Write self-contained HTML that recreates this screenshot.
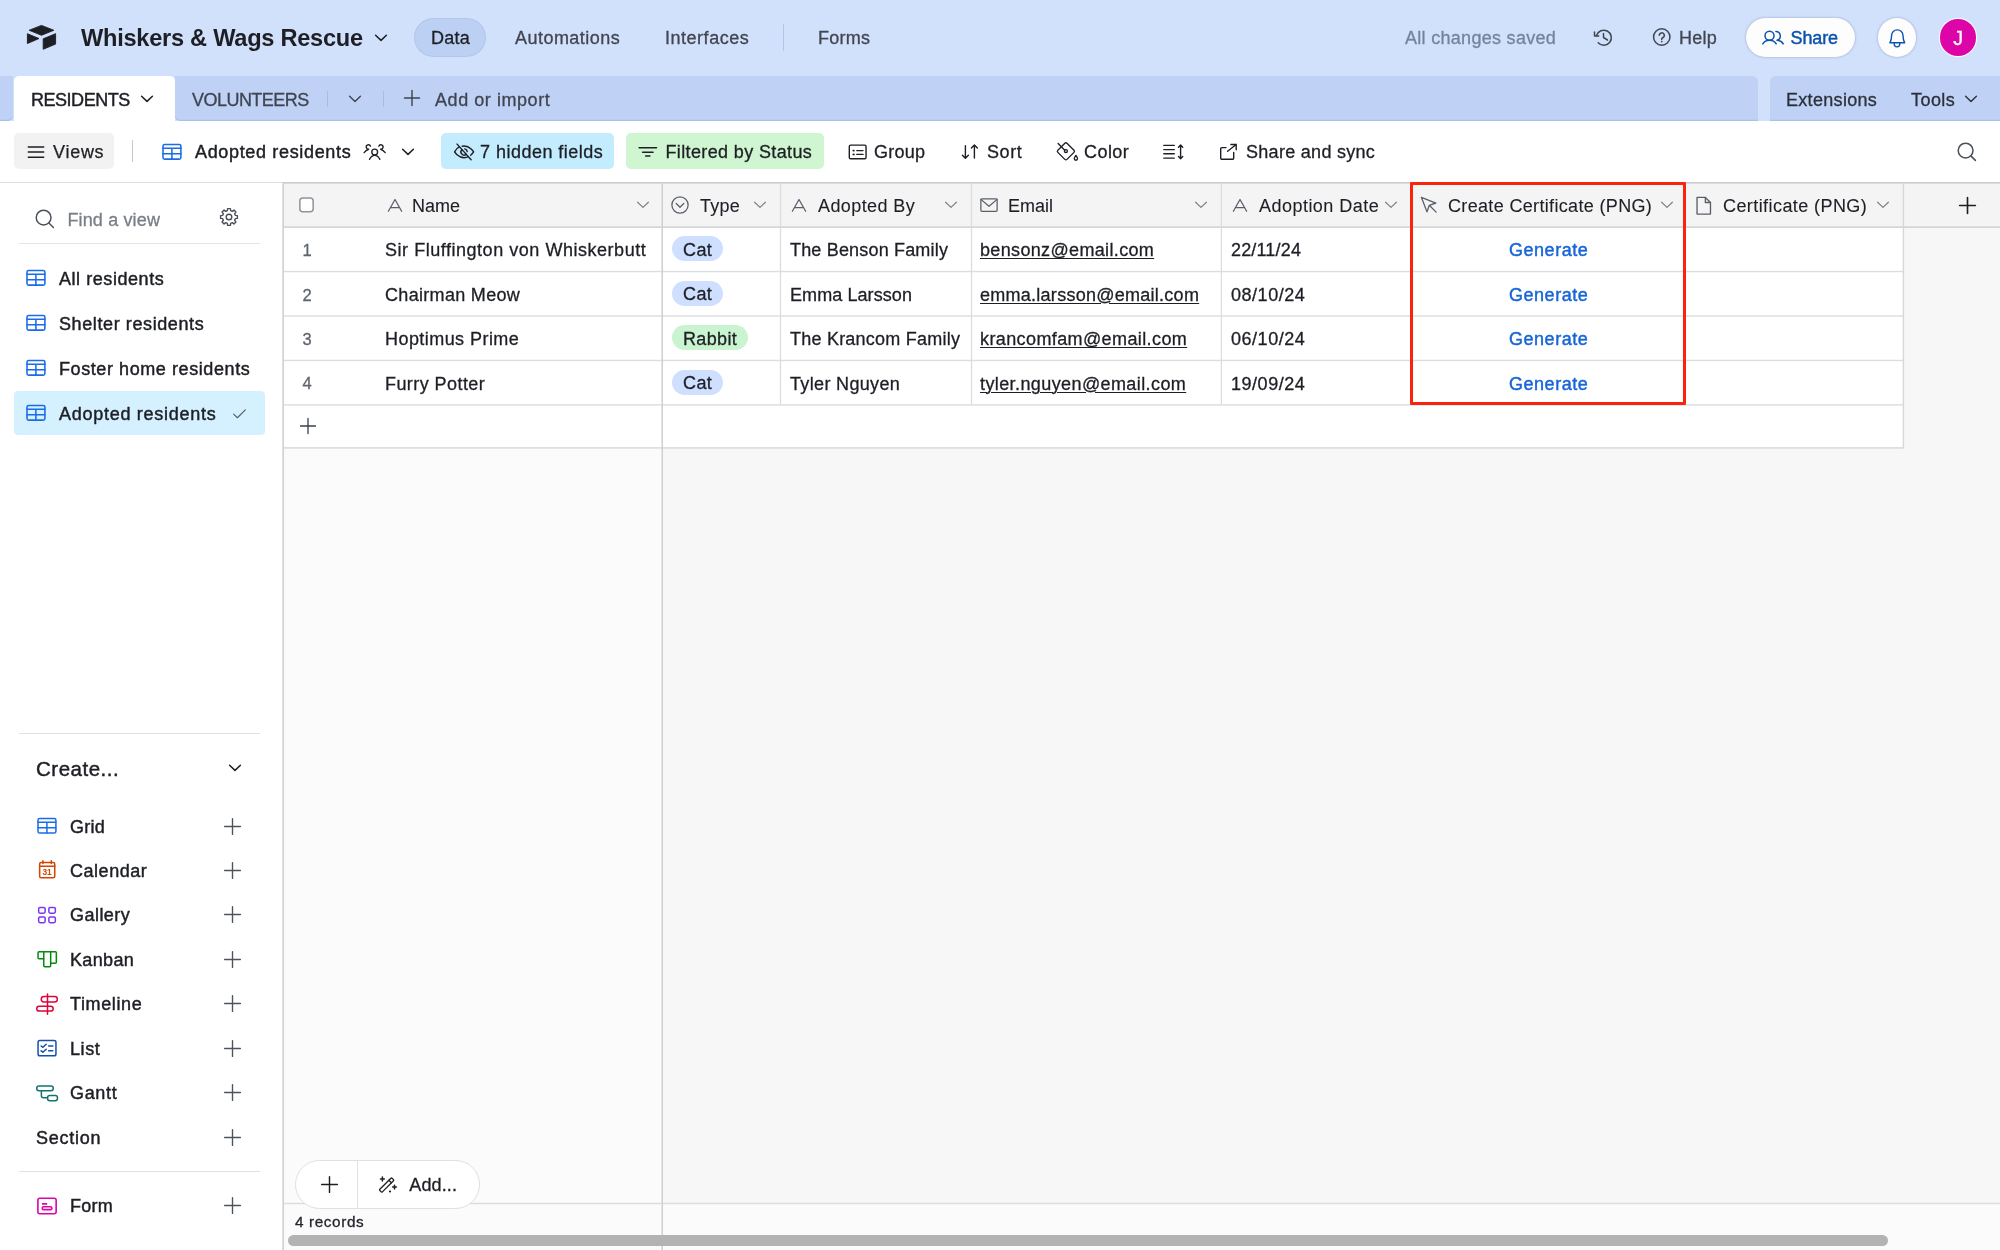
<!DOCTYPE html>
<html lang="en"><head><meta charset="utf-8"><title>Whiskers &amp; Wags Rescue - Airtable</title><style>
*{margin:0;padding:0}
html,body{width:2000px;height:1250px;overflow:hidden;background:#d1e1fc;font-family:"Liberation Sans",sans-serif}
.b{position:absolute}
.t{position:absolute;white-space:nowrap}
.i{position:absolute;overflow:visible}
header,nav,section,aside,main{position:absolute;left:0;top:0;width:2000px;height:1250px;will-change:transform}
</style></head><body>
<header class="top">
<svg class="i" style="left:0;top:0" width="70" height="70" viewBox="0 0 70 70" fill="#1d1f25" stroke="#1d1f25" stroke-width="0.9" stroke-linejoin="round"><path d="M29.200 30.250L41.500 25.400L53.800 30.250L41.500 35.300z"/><path d="M27.400 33.700L39 38.550L27.400 43.500z"/><path d="M43.200 38.800L55.600 33.700V44.100L43.200 49.300z"/></svg>
<span class="t" style="left:81.00px;top:23.16px;font-size:23.60px;line-height:30.68px;color:#1d1f25;font-weight:700;letter-spacing:-0.261px;">Whiskers &amp; Wags Rescue</span>
<svg class="i" style="left:373.00px;top:29.70px;color:#1d1f25;" width="16.00" height="16.00" viewBox="0 0 16 16" fill="none" stroke="currentColor" stroke-width="1.50" stroke-linecap="round" stroke-linejoin="round"><path d="M2.600 5.200L8 10.400l5.400-5.200"/></svg>
<div class="b" style="left:414.00px;top:18.00px;width:72.00px;height:38.50px;background:#bcd0f3;border-radius:20px;box-shadow:inset 0 0 0 1px rgba(40,70,140,.07)"></div>
<span class="t" style="left:431.00px;top:27.10px;font-size:18.00px;line-height:23.40px;color:#1d1f25;-webkit-text-stroke:0.30px #1d1f25;letter-spacing:0.277px;">Data</span>
<span class="t" style="left:515.00px;top:27.10px;font-size:18.00px;line-height:23.40px;color:#40454f;-webkit-text-stroke:0.30px #40454f;letter-spacing:0.470px;">Automations</span>
<span class="t" style="left:665.00px;top:27.10px;font-size:18.00px;line-height:23.40px;color:#40454f;-webkit-text-stroke:0.30px #40454f;letter-spacing:0.521px;">Interfaces</span>
<div class="b" style="left:783.00px;top:24.00px;width:1.40px;height:27.00px;background:#b4c4e4"></div>
<span class="t" style="left:818.00px;top:27.10px;font-size:18.00px;line-height:23.40px;color:#40454f;-webkit-text-stroke:0.30px #40454f;letter-spacing:0.222px;">Forms</span>
<span class="t" style="left:1405.00px;top:27.10px;font-size:18.00px;line-height:23.40px;color:#76829b;-webkit-text-stroke:0.30px #76829b;letter-spacing:0.297px;">All changes saved</span>
<svg class="i" style="left:1592.00px;top:25.50px;color:#40454f;" width="24.00" height="24.00" viewBox="0 0 24 24" fill="none" stroke="currentColor" stroke-width="1.50" stroke-linecap="round" stroke-linejoin="round"><path d="M4.530 9.540A7.550 7.550 0 1 1 6.190 16.860"/><path d="M2.500 5.900V10h4.200"/><path d="M11.500 7.500v4l4 2.500"/></svg>
<svg class="i" style="left:1650.00px;top:25.00px;color:#40454f;" width="24.00" height="24.00" viewBox="0 0 24 24" fill="none" stroke="currentColor" stroke-width="1.50" stroke-linecap="round" stroke-linejoin="round"><circle cx="11.750" cy="12" r="8.200"/><path d="M9.300 10.300a2.500 2.500 0 1 1 3.400 2.400c-.6.250-.95.700-.95 1.300v.4"/><circle cx="11.750" cy="16.600" r=".85" fill="currentColor" stroke="none"/></svg>
<span class="t" style="left:1679.00px;top:27.10px;font-size:18.00px;line-height:23.40px;color:#40454f;-webkit-text-stroke:0.30px #40454f;letter-spacing:0.277px;">Help</span>
<div class="b" style="left:1745.50px;top:18.00px;width:109.50px;height:38.60px;background:#fdfdfe;border-radius:20px;box-shadow:0 0 2.500px rgba(20,40,90,.35)"></div>
<svg class="i" style="left:1761.00px;top:25.50px;color:#0d52ac;" width="24.00" height="24.00" viewBox="0 0 24 24" fill="none" stroke="currentColor" stroke-width="1.50" stroke-linecap="round" stroke-linejoin="round"><circle cx="8.500" cy="9.750" r="4.500"/><path d="M1.800 17.900c1.400-2.400 3.800-3.700 6.700-3.700s5.300 1.300 6.700 3.700"/><path d="M14.900 5.400a4.500 4.500 0 0 1 1.200 8.800"/><path d="M16.600 14.300c2.400.2 4.400 1.500 5.600 3.600"/></svg>
<span class="t" style="left:1790.50px;top:27.10px;font-size:18.00px;line-height:23.40px;color:#0d52ac;-webkit-text-stroke:0.45px #0d52ac;letter-spacing:-0.122px;">Share</span>
<div class="b" style="left:1877.50px;top:18.00px;width:38.40px;height:38.60px;background:#fdfdfe;border-radius:20px;box-shadow:0 0 2.500px rgba(20,40,90,.35)"></div>
<svg class="i" style="left:1884.70px;top:25.35px;color:#0d52ac;" width="24.00" height="24.00" viewBox="0 0 24 24" fill="none" stroke="currentColor" stroke-width="1.40" stroke-linecap="round" stroke-linejoin="round"><path d="M4.900 17.800h14.800c-1.100-1.800-1.700-4.200-1.700-7.200a5.700 5.700 0 0 0-11.400 0c0 3-.6 5.400-1.700 7.200z"/><path d="M9.150 18.300a2.850 3.600 0 0 0 5.700 0"/></svg>
<div class="b" style="left:1939.60px;top:18.60px;width:36.90px;height:37.40px;background:#dd04a8;border-radius:20px;box-shadow:0 0 0 1.200px rgba(255,255,255,.85)"></div>
<span class="t" style="left:1953.30px;top:25.86px;font-size:19.60px;line-height:25.48px;color:#fff;-webkit-text-stroke:0.30px #fff;">J</span>
</header>
<nav class="tabs">
<div class="b" style="left:0.00px;top:76.00px;width:13.00px;height:44.60px;background:#bfd2f5;border-radius:0 0 5px 0;box-shadow:inset 0 -1.200px 0 #abc1e8"></div>
<div class="b" style="left:13.50px;top:76.00px;width:161.50px;height:46.00px;background:#fff;border-radius:5px 5px 0 0"></div>
<div class="b" style="left:175.00px;top:76.00px;width:1583.00px;height:44.60px;background:#bfd2f5;border-radius:0 6px 0 5px;box-shadow:inset 0 -1.200px 0 #abc1e8"></div>
<div class="b" style="left:1770.00px;top:76.00px;width:230.00px;height:44.60px;background:#bfd2f5;border-radius:6px 0 0 0;box-shadow:inset 0 -1.200px 0 #abc1e8"></div>
<span class="t" style="left:31.00px;top:88.70px;font-size:18.00px;line-height:23.40px;color:#1d1f25;-webkit-text-stroke:0.45px #1d1f25;letter-spacing:-0.474px;">RESIDENTS</span>
<svg class="i" style="left:139.10px;top:90.95px;color:#1d1f25;" width="16.00" height="16.00" viewBox="0 0 16 16" fill="none" stroke="currentColor" stroke-width="1.50" stroke-linecap="round" stroke-linejoin="round"><path d="M2.600 5.200L8 10.400l5.400-5.200"/></svg>
<span class="t" style="left:192.00px;top:88.70px;font-size:18.00px;line-height:23.40px;color:#3f4450;-webkit-text-stroke:0.30px #3f4450;letter-spacing:-0.530px;">VOLUNTEERS</span>
<div class="b" style="left:327.00px;top:91.00px;width:1.30px;height:16.00px;background:#a9bde2"></div>
<svg class="i" style="left:347.40px;top:90.95px;color:#3f4450;" width="16.00" height="16.00" viewBox="0 0 16 16" fill="none" stroke="currentColor" stroke-width="1.40" stroke-linecap="round" stroke-linejoin="round"><path d="M2.600 5.200L8 10.400l5.400-5.200"/></svg>
<div class="b" style="left:383.00px;top:91.00px;width:1.30px;height:16.00px;background:#a9bde2"></div>
<svg class="i" style="left:402.00px;top:88.00px;color:#3f4450;" width="20.00" height="20.00" viewBox="0 0 16 16" fill="none" stroke="currentColor" stroke-width="1.15" stroke-linecap="round" stroke-linejoin="round"><path d="M8 2v12M2 8h12"/></svg>
<span class="t" style="left:435.00px;top:88.70px;font-size:18.00px;line-height:23.40px;color:#3f4450;-webkit-text-stroke:0.30px #3f4450;letter-spacing:0.556px;">Add or import</span>
<span class="t" style="left:1786.00px;top:88.70px;font-size:18.00px;line-height:23.40px;color:#2c303a;-webkit-text-stroke:0.30px #2c303a;letter-spacing:0.309px;">Extensions</span>
<span class="t" style="left:1911.00px;top:88.70px;font-size:18.00px;line-height:23.40px;color:#2c303a;-webkit-text-stroke:0.30px #2c303a;letter-spacing:0.438px;">Tools</span>
<svg class="i" style="left:1963.25px;top:90.95px;color:#2c303a;" width="16.00" height="16.00" viewBox="0 0 16 16" fill="none" stroke="currentColor" stroke-width="1.40" stroke-linecap="round" stroke-linejoin="round"><path d="M2.600 5.200L8 10.400l5.400-5.200"/></svg>
</nav>
<section class="viewbar">
<div class="b" style="left:0.00px;top:121.00px;width:2000.00px;height:1129.00px;background:#fff"></div>
<div class="b" style="left:14.00px;top:133.30px;width:100.00px;height:35.70px;background:#f2f2f2;border-radius:5px"></div>
<svg class="i" style="left:24px;top:139.500px;color:#1d1f25" width="24" height="24" viewBox="0 0 24 24" fill="none" stroke="currentColor" stroke-width="1.500" stroke-linecap="round"><path d="M4.300 6.900h15.400M4.300 12.100h15.400M4.300 17.300h15.400"/></svg>
<span class="t" style="left:53.00px;top:141.10px;font-size:18.00px;line-height:23.40px;color:#1d1f25;-webkit-text-stroke:0.25px #1d1f25;letter-spacing:0.733px;">Views</span>
<div class="b" style="left:131.50px;top:140.00px;width:1.60px;height:22.00px;background:#c8c9cc"></div>
<svg class="i" style="left:159.55px;top:139.75px;color:#1a6ce8;" width="24.00" height="24.00" viewBox="0 0 24 24" fill="none" stroke="currentColor" stroke-width="1.55" stroke-linecap="round" stroke-linejoin="round"><rect x="3" y="4.400" width="17.900" height="14.700" rx="1.700"/><path d="M3 8.300h17.900M3 13.800h17.900M11.900 8.300v10.800"/></svg>
<span class="t" style="left:195.00px;top:141.10px;font-size:18.00px;line-height:23.40px;color:#1d1f25;-webkit-text-stroke:0.45px #1d1f25;letter-spacing:0.660px;">Adopted residents</span>
<svg class="i" style="left:363.00px;top:140.00px;color:#1d1f25;" width="24.00" height="24.00" viewBox="0 0 24 24" fill="none" stroke="currentColor" stroke-width="1.35" stroke-linecap="round" stroke-linejoin="round"><circle cx="11.700" cy="12" r="2.900"/><path d="M6.500 19.400Q8.500 15.400 11.700 15.400Q14.900 15.400 16.900 19.400"/><path d="M7.500 6.200A2.200 2.200 0 1 0 5.800 9.150M1.100 12.600Q3 10.200 5.600 9.300"/><path d="M15.800 6.200A2.200 2.200 0 1 1 17.500 9.150M22.200 12.600Q20.300 10.200 17.700 9.300"/></svg>
<svg class="i" style="left:400.00px;top:143.50px;color:#1d1f25;" width="16.00" height="16.00" viewBox="0 0 16 16" fill="none" stroke="currentColor" stroke-width="1.50" stroke-linecap="round" stroke-linejoin="round"><path d="M2.600 5.200L8 10.400l5.400-5.200"/></svg>
<div class="b" style="left:441.00px;top:133.30px;width:173.00px;height:35.70px;background:#c4ecff;border-radius:5px"></div>
<svg class="i" style="left:451.50px;top:139.50px;color:#1d1f25;" width="24.00" height="24.00" viewBox="0 0 24 24" fill="none" stroke="currentColor" stroke-width="1.40" stroke-linecap="round" stroke-linejoin="round"><path d="M5.100 4.100L19.100 19.700"/><path d="M7.300 6.900C4.300 8.400 2.600 11.900 2.600 11.900s3.300 5.800 9.500 5.800c1.600 0 3-.4 4.200-1"/><path d="M10.200 6.200c.6-.1 1.200-.2 1.900-.2 6.200 0 9.500 5.900 9.500 5.900s-1 1.800-2.900 3.300"/><path d="M14.200 14.200a3.100 3.100 0 0 1-4.300-4.500M12.700 8.900a3.100 3.100 0 0 1 2.500 2.700"/></svg>
<span class="t" style="left:480.00px;top:141.10px;font-size:18.00px;line-height:23.40px;color:#1d1f25;-webkit-text-stroke:0.30px #1d1f25;letter-spacing:0.476px;">7 hidden fields</span>
<div class="b" style="left:626.00px;top:133.30px;width:198.00px;height:35.70px;background:#cff5d1;border-radius:5px"></div>
<svg class="i" style="left:636.00px;top:139.50px;color:#1d1f25;" width="24.00" height="24.00" viewBox="0 0 24 24" fill="none" stroke="currentColor" stroke-width="1.50" stroke-linecap="round" stroke-linejoin="round"><path d="M3.100 7.700h17.400M6.600 12.200h10.450M9.700 16.100h4.200"/></svg>
<span class="t" style="left:665.50px;top:141.10px;font-size:18.00px;line-height:23.40px;color:#1d1f25;-webkit-text-stroke:0.30px #1d1f25;letter-spacing:0.368px;">Filtered by Status</span>
<svg class="i" style="left:845.50px;top:139.50px;color:#1d1f25;" width="24.00" height="24.00" viewBox="0 0 24 24" fill="none" stroke="currentColor" stroke-width="1.40" stroke-linecap="round" stroke-linejoin="round"><rect x="3.300" y="5.100" width="16.750" height="13.600" rx="1.300"/><path d="M10.750 10.600H17M10.750 14.400H17"/><path d="M7.300 10.600h.6M7.300 14.400h.6" stroke-width="1.700"/></svg>
<span class="t" style="left:874.00px;top:141.10px;font-size:18.00px;line-height:23.40px;color:#1d1f25;-webkit-text-stroke:0.30px #1d1f25;letter-spacing:0.215px;">Group</span>
<svg class="i" style="left:958.00px;top:139.50px;color:#1d1f25;" width="24.00" height="24.00" viewBox="0 0 24 24" fill="none" stroke="currentColor" stroke-width="1.40" stroke-linecap="round" stroke-linejoin="round"><path d="M7.400 5.700V18M4.400 15.200l3 3 3-3"/><path d="M16.400 18V5.100M13.400 8.100l3-3 3 3"/></svg>
<span class="t" style="left:987.00px;top:141.10px;font-size:18.00px;line-height:23.40px;color:#1d1f25;-webkit-text-stroke:0.30px #1d1f25;letter-spacing:0.567px;">Sort</span>
<svg class="i" style="left:1054.00px;top:139.50px;color:#1d1f25;" width="24.00" height="24.00" viewBox="0 0 24 24" fill="none" stroke="currentColor" stroke-width="1.35" stroke-linecap="round" stroke-linejoin="round"><rect x="5.450" y="4.850" width="12.900" height="12.900" rx="1.500" transform="rotate(45 11.900 11.300)"/><path d="M4.100 3.500l6.700 6.700"/><circle cx="11.900" cy="11.100" r="1.500"/><path d="M21.900 15.400c1 1.400 1.600 2.300 1.600 3.200a1.600 1.600 0 0 1-3.200 0c0-.9.600-1.800 1.600-3.200z"/></svg>
<span class="t" style="left:1084.00px;top:141.10px;font-size:18.00px;line-height:23.40px;color:#1d1f25;-webkit-text-stroke:0.30px #1d1f25;letter-spacing:0.441px;">Color</span>
<svg class="i" style="left:1161.00px;top:139.50px;color:#1d1f25;" width="24.00" height="24.00" viewBox="0 0 24 24" fill="none" stroke="currentColor" stroke-width="1.40" stroke-linecap="round" stroke-linejoin="round"><path d="M2.800 5.400h10.500M2.800 9.600h10.500M2.800 13.750h10.500M2.800 18.100h10.500"/><path d="M19.600 5.100v13.600M17.500 7.200l2.100-2.100 2.100 2.100M17.500 16.600l2.100 2.100 2.100-2.100"/></svg>
<svg class="i" style="left:1217.00px;top:139.50px;color:#1d1f25;" width="24.00" height="24.00" viewBox="0 0 24 24" fill="none" stroke="currentColor" stroke-width="1.40" stroke-linecap="round" stroke-linejoin="round"><path d="M9 7.600H4.900a1.200 1.200 0 0 0-1.200 1.200v9.300a1.200 1.200 0 0 0 1.200 1.200h10.600a1.200 1.200 0 0 0 1.200-1.200v-5.600"/><path d="M10.600 11.200l8.600-6.750M13.900 4.450h5.300v5.300"/></svg>
<span class="t" style="left:1246.00px;top:141.10px;font-size:18.00px;line-height:23.40px;color:#1d1f25;-webkit-text-stroke:0.30px #1d1f25;letter-spacing:0.291px;">Share and sync</span>
<svg class="i" style="left:1954.70px;top:139.50px;color:#4a4f59;" width="24.00" height="24.00" viewBox="0 0 24 24" fill="none" stroke="currentColor" stroke-width="1.50" stroke-linecap="round" stroke-linejoin="round"><circle cx="10.600" cy="10.600" r="7.400"/><path d="M15.900 15.900l4.500 4.500"/></svg>
</section>
<aside class="side">
<div class="b" style="left:0.00px;top:183.00px;width:283.00px;height:1067.00px;background:#fff"></div>
<svg class="i" style="left:32.80px;top:207.20px;color:#4a4f59;" width="24.00" height="24.00" viewBox="0 0 24 24" fill="none" stroke="currentColor" stroke-width="1.45" stroke-linecap="round" stroke-linejoin="round"><circle cx="10.600" cy="10.600" r="7.400"/><path d="M15.900 15.900l4.500 4.500"/></svg>
<span class="t" style="left:67.40px;top:208.60px;font-size:18.00px;line-height:23.40px;color:#797e88;-webkit-text-stroke:0.30px #797e88;letter-spacing:0.148px;">Find a view</span>
<svg class="i" style="left:217.40px;top:205.40px;color:#4a4f59;" width="24.00" height="24.00" viewBox="0 0 24 24" fill="none" stroke="currentColor" stroke-width="1.40" stroke-linecap="round" stroke-linejoin="round"><circle cx="12" cy="12" r="2.800"/><path d="M10.32 5.72L10.60 3.62L13.40 3.62L13.68 5.72L15.25 6.37L16.94 5.08L18.92 7.06L17.63 8.75L18.28 10.32L20.38 10.60L20.38 13.40L18.28 13.68L17.63 15.25L18.92 16.94L16.94 18.92L15.25 17.63L13.68 18.28L13.40 20.38L10.60 20.38L10.32 18.28L8.75 17.63L7.06 18.92L5.08 16.94L6.37 15.25L5.72 13.68L3.62 13.40L3.62 10.60L5.72 10.32L6.37 8.75L5.08 7.06L7.06 5.08L8.75 6.37z"/></svg>
<div class="b" style="left:19.00px;top:242.80px;width:241.00px;height:1.70px;background:#e4e5e8"></div>
<div class="b" style="left:14.00px;top:391.00px;width:251.00px;height:44.00px;background:#d5f1ff;border-radius:4px"></div>
<svg class="i" style="left:24.00px;top:266.20px;color:#1a6ce8;" width="24.00" height="24.00" viewBox="0 0 24 24" fill="none" stroke="currentColor" stroke-width="1.55" stroke-linecap="round" stroke-linejoin="round"><rect x="3" y="4.400" width="17.900" height="14.700" rx="1.700"/><path d="M3 8.300h17.900M3 13.800h17.900M11.900 8.300v10.800"/></svg>
<span class="t" style="left:59.00px;top:267.60px;font-size:18.00px;line-height:23.40px;color:#1d1f25;-webkit-text-stroke:0.45px #1d1f25;letter-spacing:0.556px;">All residents</span>
<svg class="i" style="left:24.00px;top:311.20px;color:#1a6ce8;" width="24.00" height="24.00" viewBox="0 0 24 24" fill="none" stroke="currentColor" stroke-width="1.55" stroke-linecap="round" stroke-linejoin="round"><rect x="3" y="4.400" width="17.900" height="14.700" rx="1.700"/><path d="M3 8.300h17.900M3 13.800h17.900M11.900 8.300v10.800"/></svg>
<span class="t" style="left:59.00px;top:312.60px;font-size:18.00px;line-height:23.40px;color:#1d1f25;-webkit-text-stroke:0.45px #1d1f25;letter-spacing:0.601px;">Shelter residents</span>
<svg class="i" style="left:24.00px;top:356.20px;color:#1a6ce8;" width="24.00" height="24.00" viewBox="0 0 24 24" fill="none" stroke="currentColor" stroke-width="1.55" stroke-linecap="round" stroke-linejoin="round"><rect x="3" y="4.400" width="17.900" height="14.700" rx="1.700"/><path d="M3 8.300h17.900M3 13.800h17.900M11.900 8.300v10.800"/></svg>
<span class="t" style="left:59.00px;top:357.60px;font-size:18.00px;line-height:23.40px;color:#1d1f25;-webkit-text-stroke:0.45px #1d1f25;letter-spacing:0.582px;">Foster home residents</span>
<svg class="i" style="left:24.00px;top:401.20px;color:#1a6ce8;" width="24.00" height="24.00" viewBox="0 0 24 24" fill="none" stroke="currentColor" stroke-width="1.55" stroke-linecap="round" stroke-linejoin="round"><rect x="3" y="4.400" width="17.900" height="14.700" rx="1.700"/><path d="M3 8.300h17.900M3 13.800h17.900M11.900 8.300v10.800"/></svg>
<span class="t" style="left:59.00px;top:402.60px;font-size:18.00px;line-height:23.40px;color:#1d1f25;-webkit-text-stroke:0.45px #1d1f25;letter-spacing:0.721px;">Adopted residents</span>
<svg class="i" style="left:231.00px;top:404.50px;color:#575c66;" width="17.00" height="17.00" viewBox="0 0 16 16" fill="none" stroke="currentColor" stroke-width="1.05" stroke-linecap="round" stroke-linejoin="round"><path d="M2.500 8.500l3.500 3.500 7.500-7.500"/></svg>
<div class="b" style="left:19.00px;top:733.00px;width:241.00px;height:1.40px;background:#e0e1e3"></div>
<span class="t" style="left:36.00px;top:755.57px;font-size:20.50px;line-height:26.65px;color:#1d1f25;-webkit-text-stroke:0.45px #1d1f25;letter-spacing:0.515px;">Create...</span>
<svg class="i" style="left:227.00px;top:759.60px;color:#1d1f25;" width="16.00" height="16.00" viewBox="0 0 16 16" fill="none" stroke="currentColor" stroke-width="1.50" stroke-linecap="round" stroke-linejoin="round"><path d="M2.600 5.200L8 10.400l5.400-5.200"/></svg>
<svg class="i" style="left:35.00px;top:814.00px;color:#1a6ce8;" width="24.00" height="24.00" viewBox="0 0 24 24" fill="none" stroke="currentColor" stroke-width="1.50" stroke-linecap="round" stroke-linejoin="round"><rect x="3" y="4.400" width="17.900" height="14.700" rx="1.700"/><path d="M3 8.300h17.900M3 13.800h17.900M11.900 8.300v10.800"/></svg>
<span class="t" style="left:70.00px;top:815.60px;font-size:18.00px;line-height:23.40px;color:#1d1f25;-webkit-text-stroke:0.45px #1d1f25;letter-spacing:0.281px;">Grid</span>
<svg class="i" style="left:221.50px;top:815.50px;color:#4d525c;" width="21.00" height="21.00" viewBox="0 0 16 16" fill="none" stroke="currentColor" stroke-width="1.05" stroke-linecap="round" stroke-linejoin="round"><path d="M8 2v12M2 8h12"/></svg>
<svg class="i" style="left:35.00px;top:858.44px;color:#d54401;" width="24.00" height="24.00" viewBox="0 0 24 24" fill="none" stroke="currentColor" stroke-width="1.50" stroke-linecap="round" stroke-linejoin="round"><rect x="4.650" y="4.500" width="15.100" height="15.300" rx="1.500"/><path d="M4.650 8.300h15.100M7.900 2.700v2.900M16.300 2.700v2.900"/><text x="12.100" y="16.900" text-anchor="middle" font-family="Liberation Sans, sans-serif" font-size="8.400" font-weight="700" fill="currentColor" stroke="none">31</text></svg>
<span class="t" style="left:70.00px;top:860.04px;font-size:18.00px;line-height:23.40px;color:#1d1f25;-webkit-text-stroke:0.45px #1d1f25;letter-spacing:0.527px;">Calendar</span>
<svg class="i" style="left:221.50px;top:859.94px;color:#4d525c;" width="21.00" height="21.00" viewBox="0 0 16 16" fill="none" stroke="currentColor" stroke-width="1.05" stroke-linecap="round" stroke-linejoin="round"><path d="M8 2v12M2 8h12"/></svg>
<svg class="i" style="left:35.00px;top:902.88px;color:#7c37ef;" width="24.00" height="24.00" viewBox="0 0 24 24" fill="none" stroke="currentColor" stroke-width="1.50" stroke-linecap="round" stroke-linejoin="round"><rect x="3.650" y="4.450" width="6.500" height="5.700" rx="1.400"/><rect x="13.850" y="4.450" width="6.500" height="5.700" rx="1.400"/><rect x="3.650" y="13.950" width="6.500" height="5.700" rx="1.400"/><rect x="13.850" y="13.950" width="6.500" height="5.700" rx="1.400"/></svg>
<span class="t" style="left:70.00px;top:904.48px;font-size:18.00px;line-height:23.40px;color:#1d1f25;-webkit-text-stroke:0.45px #1d1f25;letter-spacing:0.459px;">Gallery</span>
<svg class="i" style="left:221.50px;top:904.38px;color:#4d525c;" width="21.00" height="21.00" viewBox="0 0 16 16" fill="none" stroke="currentColor" stroke-width="1.05" stroke-linecap="round" stroke-linejoin="round"><path d="M8 2v12M2 8h12"/></svg>
<svg class="i" style="left:35.00px;top:947.32px;color:#048a0e;" width="24.00" height="24.00" viewBox="0 0 24 24" fill="none" stroke="currentColor" stroke-width="1.50" stroke-linecap="round" stroke-linejoin="round"><path d="M8.750 4.650H4.050a1 1 0 0 0-1 1v5.100a1 1 0 0 0 1 1h4.700"/><path d="M8.750 4.650v14.100a1 1 0 0 0 1 1h4.900a1 1 0 0 0 1-1V4.650z"/><path d="M15.650 4.650h4.700a1 1 0 0 1 1 1v9.600a1 1 0 0 1-1 1h-4.700"/></svg>
<span class="t" style="left:70.00px;top:948.92px;font-size:18.00px;line-height:23.40px;color:#1d1f25;-webkit-text-stroke:0.45px #1d1f25;letter-spacing:0.352px;">Kanban</span>
<svg class="i" style="left:221.50px;top:948.82px;color:#4d525c;" width="21.00" height="21.00" viewBox="0 0 16 16" fill="none" stroke="currentColor" stroke-width="1.05" stroke-linecap="round" stroke-linejoin="round"><path d="M8 2v12M2 8h12"/></svg>
<svg class="i" style="left:35.00px;top:991.76px;color:#dc043b;" width="24.00" height="24.00" viewBox="0 0 24 24" fill="none" stroke="currentColor" stroke-width="1.50" stroke-linecap="round" stroke-linejoin="round"><path d="M12.500 1.900v20.400"/><rect x="6.250" y="4.550" width="16.100" height="5.500" rx="2.700"/><rect x="1.750" y="14.150" width="16.400" height="4.900" rx="2.400"/></svg>
<span class="t" style="left:70.00px;top:993.36px;font-size:18.00px;line-height:23.40px;color:#1d1f25;-webkit-text-stroke:0.45px #1d1f25;letter-spacing:0.619px;">Timeline</span>
<svg class="i" style="left:221.50px;top:993.26px;color:#4d525c;" width="21.00" height="21.00" viewBox="0 0 16 16" fill="none" stroke="currentColor" stroke-width="1.05" stroke-linecap="round" stroke-linejoin="round"><path d="M8 2v12M2 8h12"/></svg>
<svg class="i" style="left:35.00px;top:1036.20px;color:#1450aa;" width="24.00" height="24.00" viewBox="0 0 24 24" fill="none" stroke="currentColor" stroke-width="1.50" stroke-linecap="round" stroke-linejoin="round"><rect x="3.050" y="4.550" width="17.900" height="15.200" rx="1.800"/><path d="M6.100 10l1.800 1.300 3.300-3.100M6.100 14.800l1.800 1.400 3.300-3M13.600 10h4.200M13.600 14.800h4.200"/></svg>
<span class="t" style="left:70.00px;top:1037.80px;font-size:18.00px;line-height:23.40px;color:#1d1f25;-webkit-text-stroke:0.45px #1d1f25;letter-spacing:0.567px;">List</span>
<svg class="i" style="left:221.50px;top:1037.70px;color:#4d525c;" width="21.00" height="21.00" viewBox="0 0 16 16" fill="none" stroke="currentColor" stroke-width="1.05" stroke-linecap="round" stroke-linejoin="round"><path d="M8 2v12M2 8h12"/></svg>
<svg class="i" style="left:35.00px;top:1080.64px;color:#11756f;" width="24.00" height="24.00" viewBox="0 0 24 24" fill="none" stroke="currentColor" stroke-width="1.50" stroke-linecap="round" stroke-linejoin="round"><rect x="1.750" y="4.950" width="16.500" height="4.800" rx="2.200"/><rect x="12.550" y="14.550" width="9.900" height="5.100" rx="2.200"/><path d="M6.400 9.750v5.050a2 2 0 0 0 2 2h4.150"/></svg>
<span class="t" style="left:70.00px;top:1082.24px;font-size:18.00px;line-height:23.40px;color:#1d1f25;-webkit-text-stroke:0.45px #1d1f25;letter-spacing:0.660px;">Gantt</span>
<svg class="i" style="left:221.50px;top:1082.14px;color:#4d525c;" width="21.00" height="21.00" viewBox="0 0 16 16" fill="none" stroke="currentColor" stroke-width="1.05" stroke-linecap="round" stroke-linejoin="round"><path d="M8 2v12M2 8h12"/></svg>
<span class="t" style="left:36.00px;top:1126.70px;font-size:18.00px;line-height:23.40px;color:#1d1f25;-webkit-text-stroke:0.45px #1d1f25;letter-spacing:0.762px;">Section</span>
<svg class="i" style="left:221.50px;top:1126.60px;color:#4d525c;" width="21.00" height="21.00" viewBox="0 0 16 16" fill="none" stroke="currentColor" stroke-width="1.05" stroke-linecap="round" stroke-linejoin="round"><path d="M8 2v12M2 8h12"/></svg>
<div class="b" style="left:19.00px;top:1171.00px;width:241.00px;height:1.40px;background:#e0e1e3"></div>
<svg class="i" style="left:35.00px;top:1193.50px;color:#dd04a8;" width="24.00" height="24.00" viewBox="0 0 24 24" fill="none" stroke="currentColor" stroke-width="1.60" stroke-linecap="round" stroke-linejoin="round"><rect x="2.900" y="4.250" width="18.250" height="15.500" rx="2"/><path d="M7.600 9.900h4"/><rect x="7.200" y="12.800" width="9.700" height="2.800" rx="1.400"/></svg>
<span class="t" style="left:70.00px;top:1195.20px;font-size:18.00px;line-height:23.40px;color:#1d1f25;-webkit-text-stroke:0.45px #1d1f25;letter-spacing:0.286px;">Form</span>
<svg class="i" style="left:221.50px;top:1195.10px;color:#4d525c;" width="21.00" height="21.00" viewBox="0 0 16 16" fill="none" stroke="currentColor" stroke-width="1.05" stroke-linecap="round" stroke-linejoin="round"><path d="M8 2v12M2 8h12"/></svg>
</aside>
<div class="b" style="left:0.00px;top:182.00px;width:2000.00px;height:1.40px;background:#dcdde0"></div>
<main class="grid">
<div class="b" style="left:283.60px;top:183.00px;width:378.00px;height:1067.00px;background:#fbfbfb"></div>
<div class="b" style="left:662.00px;top:183.00px;width:1338.00px;height:1067.00px;background:#f7f7f7"></div>
<div class="b" style="left:283.60px;top:183.00px;width:1619.00px;height:44.00px;background:#f4f4f4"></div>
<div class="b" style="left:1903.00px;top:183.00px;width:97.00px;height:44.00px;background:#f4f4f4"></div>
<div class="b" style="left:283.60px;top:1203.50px;width:1716.40px;height:46.50px;background:#fbfbfb"></div>
<div class="b" style="left:283.60px;top:227.00px;width:1619.40px;height:221.00px;background:#fff"></div>
<svg class="i" style="left:0;top:0" width="2000" height="1250" viewBox="0 0 2000 1250"><rect x="283.00" y="182.10" width="1717.00" height="1.50" fill="#c9cbd0"/><rect x="283.60" y="226.35" width="1716.40" height="1.50" fill="#cfd1d5"/><rect x="283.60" y="270.85" width="1619.40" height="1.40" fill="#dcdde0"/><rect x="283.60" y="315.30" width="1619.40" height="1.40" fill="#dcdde0"/><rect x="283.60" y="359.75" width="1619.40" height="1.40" fill="#dcdde0"/><rect x="283.60" y="404.20" width="1619.40" height="1.40" fill="#dcdde0"/><rect x="283.60" y="447.20" width="1620.00" height="1.40" fill="#d4d6da"/><rect x="779.85" y="183.50" width="1.30" height="221.80" fill="#dcdde0"/><rect x="970.85" y="183.50" width="1.30" height="221.80" fill="#dcdde0"/><rect x="1220.75" y="183.50" width="1.30" height="221.80" fill="#dcdde0"/><rect x="1410.35" y="183.50" width="1.30" height="221.80" fill="#dcdde0"/><rect x="1684.65" y="183.50" width="1.30" height="221.80" fill="#dcdde0"/><rect x="1902.70" y="183.50" width="1.40" height="265.00" fill="#d6d8dc"/><rect x="283.60" y="1202.80" width="1716.40" height="1.40" fill="#dcdde0"/><rect x="661.50" y="183.50" width="1.50" height="1066.50" fill="#cdcfd3"/><rect x="282.40" y="183.00" width="1.50" height="1067.00" fill="#cbcdd2"/></svg>
<svg class="i" style="left:296px;top:194px" width="22" height="22" viewBox="296 194 22 22"><rect x="299.850" y="198.100" width="13.300" height="13.650" rx="3" fill="#fff" stroke="#90939c" stroke-width="1.500"/></svg>
<svg class="i" style="left:385.30px;top:195.00px;color:#5a5f69;" width="20.00" height="20.00" viewBox="0 0 16 16" fill="none" stroke="currentColor" stroke-width="1.00" stroke-linecap="round" stroke-linejoin="round"><path d="M2.700 13L8 3.600 13.300 13M4.400 10.100h7.200"/></svg>
<span class="t" style="left:412.00px;top:194.60px;font-size:18.00px;line-height:23.40px;color:#1d1f25;-webkit-text-stroke:0.10px #1d1f25;letter-spacing:-0.004px;">Name</span>
<svg class="i" style="left:634.70px;top:197.35px;color:#7d828b;" width="16.00" height="16.00" viewBox="0 0 16 16" fill="none" stroke="currentColor" stroke-width="1.20" stroke-linecap="round" stroke-linejoin="round"><path d="M2.600 5.200L8 10.400l5.400-5.200"/></svg>
<svg class="i" style="left:670.00px;top:195.00px;color:#5a5f69;" width="20.00" height="20.00" viewBox="0 0 16 16" fill="none" stroke="currentColor" stroke-width="1.00" stroke-linecap="round" stroke-linejoin="round"><circle cx="8" cy="8" r="6.500"/><path d="M5 6.800l3 3 3-3"/></svg>
<span class="t" style="left:700.00px;top:194.60px;font-size:18.00px;line-height:23.40px;color:#1d1f25;-webkit-text-stroke:0.10px #1d1f25;letter-spacing:0.277px;">Type</span>
<svg class="i" style="left:752.40px;top:197.35px;color:#7d828b;" width="16.00" height="16.00" viewBox="0 0 16 16" fill="none" stroke="currentColor" stroke-width="1.20" stroke-linecap="round" stroke-linejoin="round"><path d="M2.600 5.200L8 10.400l5.400-5.200"/></svg>
<svg class="i" style="left:789.30px;top:195.00px;color:#5a5f69;" width="20.00" height="20.00" viewBox="0 0 16 16" fill="none" stroke="currentColor" stroke-width="1.00" stroke-linecap="round" stroke-linejoin="round"><path d="M2.700 13L8 3.600 13.300 13M4.400 10.100h7.200"/></svg>
<span class="t" style="left:818.00px;top:194.60px;font-size:18.00px;line-height:23.40px;color:#1d1f25;-webkit-text-stroke:0.10px #1d1f25;letter-spacing:0.413px;">Adopted By</span>
<svg class="i" style="left:943.00px;top:197.35px;color:#7d828b;" width="16.00" height="16.00" viewBox="0 0 16 16" fill="none" stroke="currentColor" stroke-width="1.20" stroke-linecap="round" stroke-linejoin="round"><path d="M2.600 5.200L8 10.400l5.400-5.200"/></svg>
<svg class="i" style="left:979.30px;top:195.00px;color:#5a5f69;" width="20.00" height="20.00" viewBox="0 0 16 16" fill="none" stroke="currentColor" stroke-width="1.00" stroke-linecap="round" stroke-linejoin="round"><rect x="1.500" y="3" width="13" height="10" rx=".8"/><path d="M1.500 3.500L8 9l6.500-5.500"/></svg>
<span class="t" style="left:1008.00px;top:194.60px;font-size:18.00px;line-height:23.40px;color:#1d1f25;-webkit-text-stroke:0.10px #1d1f25;letter-spacing:-0.003px;">Email</span>
<svg class="i" style="left:1193.20px;top:197.35px;color:#7d828b;" width="16.00" height="16.00" viewBox="0 0 16 16" fill="none" stroke="currentColor" stroke-width="1.20" stroke-linecap="round" stroke-linejoin="round"><path d="M2.600 5.200L8 10.400l5.400-5.200"/></svg>
<svg class="i" style="left:1230.30px;top:195.00px;color:#5a5f69;" width="20.00" height="20.00" viewBox="0 0 16 16" fill="none" stroke="currentColor" stroke-width="1.00" stroke-linecap="round" stroke-linejoin="round"><path d="M2.700 13L8 3.600 13.300 13M4.400 10.100h7.200"/></svg>
<span class="t" style="left:1259.00px;top:194.60px;font-size:18.00px;line-height:23.40px;color:#1d1f25;-webkit-text-stroke:0.10px #1d1f25;letter-spacing:0.472px;">Adoption Date</span>
<svg class="i" style="left:1383.00px;top:197.35px;color:#7d828b;" width="16.00" height="16.00" viewBox="0 0 16 16" fill="none" stroke="currentColor" stroke-width="1.20" stroke-linecap="round" stroke-linejoin="round"><path d="M2.600 5.200L8 10.400l5.400-5.200"/></svg>
<svg class="i" style="left:1417.50px;top:194.30px;color:#5a5f69;" width="21.50" height="21.50" viewBox="0 0 16 16" fill="none" stroke="currentColor" stroke-width="1.00" stroke-linecap="round" stroke-linejoin="round"><path d="M2.500 2.500l4.200 10.800 1.700-4.900 4.900-1.700z"/><path d="M8.800 8.800l4.700 4.700"/></svg>
<span class="t" style="left:1448.00px;top:194.60px;font-size:18.00px;line-height:23.40px;color:#1d1f25;-webkit-text-stroke:0.10px #1d1f25;letter-spacing:0.338px;">Create Certificate (PNG)</span>
<svg class="i" style="left:1658.50px;top:197.35px;color:#7d828b;" width="16.00" height="16.00" viewBox="0 0 16 16" fill="none" stroke="currentColor" stroke-width="1.20" stroke-linecap="round" stroke-linejoin="round"><path d="M2.600 5.200L8 10.400l5.400-5.200"/></svg>
<svg class="i" style="left:1692.70px;top:194.50px;color:#5a5f69;" width="21.50" height="21.50" viewBox="0 0 16 16" fill="none" stroke="currentColor" stroke-width="1.00" stroke-linecap="round" stroke-linejoin="round"><path d="M3 1.800h6.200L13 5.600v8.600H3z"/><path d="M9.200 1.800v3.800H13"/></svg>
<span class="t" style="left:1723.00px;top:194.60px;font-size:18.00px;line-height:23.40px;color:#1d1f25;-webkit-text-stroke:0.10px #1d1f25;letter-spacing:0.422px;">Certificate (PNG)</span>
<svg class="i" style="left:1875.00px;top:197.35px;color:#7d828b;" width="16.00" height="16.00" viewBox="0 0 16 16" fill="none" stroke="currentColor" stroke-width="1.20" stroke-linecap="round" stroke-linejoin="round"><path d="M2.600 5.200L8 10.400l5.400-5.200"/></svg>
<svg class="i" style="left:1957.25px;top:195.10px;color:#1d1f25;" width="21.00" height="21.00" viewBox="0 0 16 16" fill="none" stroke="currentColor" stroke-width="1.25" stroke-linecap="round" stroke-linejoin="round"><path d="M8 2v12M2 8h12"/></svg>
<span class="t" style="left:302.50px;top:240.08px;font-size:16.50px;line-height:21.45px;color:#5f646e;-webkit-text-stroke:0.30px #5f646e;">1</span>
<span class="t" style="left:385.00px;top:239.10px;font-size:18.00px;line-height:23.40px;color:#1d1f25;-webkit-text-stroke:0.30px #1d1f25;letter-spacing:0.532px;">Sir Fluffington von Whiskerbutt</span>
<div class="b" style="left:672.00px;top:236.40px;width:51.00px;height:24.80px;background:#cfdfff;border-radius:13px"></div>
<span class="t" style="left:683.00px;top:238.60px;font-size:18.00px;line-height:23.40px;color:#1d1f25;-webkit-text-stroke:0.30px #1d1f25;letter-spacing:0.394px;">Cat</span>
<span class="t" style="left:790.00px;top:239.10px;font-size:18.00px;line-height:23.40px;color:#1d1f25;-webkit-text-stroke:0.30px #1d1f25;letter-spacing:0.177px;">The Benson Family</span>
<span class="t" style="left:980.00px;top:239.10px;font-size:18.00px;line-height:23.40px;color:#1d1f25;-webkit-text-stroke:0.30px #1d1f25;letter-spacing:0.342px;text-decoration:underline;text-decoration-thickness:1.3px;text-underline-offset:2.100px;">bensonz@email.com</span>
<span class="t" style="left:1231.00px;top:239.10px;font-size:18.00px;line-height:23.40px;color:#1d1f25;-webkit-text-stroke:0.30px #1d1f25;letter-spacing:0.169px;">22/11/24</span>
<span class="t" style="left:1509.00px;top:239.10px;font-size:18.00px;line-height:23.40px;color:#1765d8;-webkit-text-stroke:0.45px #1765d8;letter-spacing:0.525px;">Generate</span>
<span class="t" style="left:302.50px;top:284.55px;font-size:16.50px;line-height:21.45px;color:#5f646e;-webkit-text-stroke:0.30px #5f646e;">2</span>
<span class="t" style="left:385.00px;top:283.57px;font-size:18.00px;line-height:23.40px;color:#1d1f25;-webkit-text-stroke:0.30px #1d1f25;letter-spacing:0.316px;">Chairman Meow</span>
<div class="b" style="left:672.00px;top:281.20px;width:51.00px;height:24.80px;background:#cfdfff;border-radius:13px"></div>
<span class="t" style="left:683.00px;top:283.40px;font-size:18.00px;line-height:23.40px;color:#1d1f25;-webkit-text-stroke:0.30px #1d1f25;letter-spacing:0.394px;">Cat</span>
<span class="t" style="left:790.00px;top:283.57px;font-size:18.00px;line-height:23.40px;color:#1d1f25;-webkit-text-stroke:0.30px #1d1f25;letter-spacing:0.083px;">Emma Larsson</span>
<span class="t" style="left:980.00px;top:283.57px;font-size:18.00px;line-height:23.40px;color:#1d1f25;-webkit-text-stroke:0.30px #1d1f25;letter-spacing:0.264px;text-decoration:underline;text-decoration-thickness:1.3px;text-underline-offset:2.100px;">emma.larsson@email.com</span>
<span class="t" style="left:1231.00px;top:283.57px;font-size:18.00px;line-height:23.40px;color:#1d1f25;-webkit-text-stroke:0.30px #1d1f25;letter-spacing:0.523px;">08/10/24</span>
<span class="t" style="left:1509.00px;top:283.57px;font-size:18.00px;line-height:23.40px;color:#1765d8;-webkit-text-stroke:0.45px #1765d8;letter-spacing:0.525px;">Generate</span>
<span class="t" style="left:302.50px;top:329.01px;font-size:16.50px;line-height:21.45px;color:#5f646e;-webkit-text-stroke:0.30px #5f646e;">3</span>
<span class="t" style="left:385.00px;top:328.04px;font-size:18.00px;line-height:23.40px;color:#1d1f25;-webkit-text-stroke:0.30px #1d1f25;letter-spacing:0.442px;">Hoptimus Prime</span>
<div class="b" style="left:672.00px;top:325.30px;width:76.00px;height:24.80px;background:#caf3d0;border-radius:13px"></div>
<span class="t" style="left:683.00px;top:327.50px;font-size:18.00px;line-height:23.40px;color:#1d1f25;-webkit-text-stroke:0.30px #1d1f25;letter-spacing:0.358px;">Rabbit</span>
<span class="t" style="left:790.00px;top:328.04px;font-size:18.00px;line-height:23.40px;color:#1d1f25;-webkit-text-stroke:0.30px #1d1f25;letter-spacing:0.226px;">The Krancom Family</span>
<span class="t" style="left:980.00px;top:328.04px;font-size:18.00px;line-height:23.40px;color:#1d1f25;-webkit-text-stroke:0.30px #1d1f25;letter-spacing:0.393px;text-decoration:underline;text-decoration-thickness:1.3px;text-underline-offset:2.100px;">krancomfam@email.com</span>
<span class="t" style="left:1231.00px;top:328.04px;font-size:18.00px;line-height:23.40px;color:#1d1f25;-webkit-text-stroke:0.30px #1d1f25;letter-spacing:0.523px;">06/10/24</span>
<span class="t" style="left:1509.00px;top:328.04px;font-size:18.00px;line-height:23.40px;color:#1765d8;-webkit-text-stroke:0.45px #1765d8;letter-spacing:0.525px;">Generate</span>
<span class="t" style="left:302.50px;top:373.48px;font-size:16.50px;line-height:21.45px;color:#5f646e;-webkit-text-stroke:0.30px #5f646e;">4</span>
<span class="t" style="left:385.00px;top:372.51px;font-size:18.00px;line-height:23.40px;color:#1d1f25;-webkit-text-stroke:0.30px #1d1f25;letter-spacing:0.432px;">Furry Potter</span>
<div class="b" style="left:672.00px;top:370.10px;width:51.00px;height:24.80px;background:#cfdfff;border-radius:13px"></div>
<span class="t" style="left:683.00px;top:372.30px;font-size:18.00px;line-height:23.40px;color:#1d1f25;-webkit-text-stroke:0.30px #1d1f25;letter-spacing:0.394px;">Cat</span>
<span class="t" style="left:790.00px;top:372.51px;font-size:18.00px;line-height:23.40px;color:#1d1f25;-webkit-text-stroke:0.30px #1d1f25;letter-spacing:0.342px;">Tyler Nguyen</span>
<span class="t" style="left:980.00px;top:372.51px;font-size:18.00px;line-height:23.40px;color:#1d1f25;-webkit-text-stroke:0.30px #1d1f25;letter-spacing:0.402px;text-decoration:underline;text-decoration-thickness:1.3px;text-underline-offset:2.100px;">tyler.nguyen@email.com</span>
<span class="t" style="left:1231.00px;top:372.51px;font-size:18.00px;line-height:23.40px;color:#1d1f25;-webkit-text-stroke:0.30px #1d1f25;letter-spacing:0.523px;">19/09/24</span>
<span class="t" style="left:1509.00px;top:372.51px;font-size:18.00px;line-height:23.40px;color:#1765d8;-webkit-text-stroke:0.45px #1765d8;letter-spacing:0.525px;">Generate</span>
<svg class="i" style="left:297.60px;top:416.30px;color:#3a3f4a;" width="20.00" height="20.00" viewBox="0 0 16 16" fill="none" stroke="currentColor" stroke-width="1.05" stroke-linecap="round" stroke-linejoin="round"><path d="M8 2v12M2 8h12"/></svg>
<div class="b" style="left:1410.30px;top:182.30px;width:275.70px;height:223.00px;border:3.100px solid #f8240e;box-sizing:border-box;border-radius:1px"></div>
<span class="t" style="left:295.00px;top:1211.76px;font-size:15.30px;line-height:19.89px;color:#24262d;-webkit-text-stroke:0.30px #24262d;letter-spacing:0.616px;">4 records</span>
<div class="b" style="left:288.00px;top:1235.00px;width:1599.50px;height:10.80px;background:#b3b3b3;border-radius:6px"></div>
<div class="b" style="left:295.00px;top:1160.00px;width:185.00px;height:49.30px;background:#fff;border:1.4px solid #dfe0e3;border-radius:25px;box-sizing:border-box"></div>
<div class="b" style="left:356.80px;top:1161.00px;width:1.40px;height:47.50px;background:#e0e1e3"></div>
<svg class="i" style="left:318.75px;top:1174.00px;color:#1d1f25;" width="21.00" height="21.00" viewBox="0 0 16 16" fill="none" stroke="currentColor" stroke-width="1.10" stroke-linecap="round" stroke-linejoin="round"><path d="M8 2v12M2 8h12"/></svg>
<svg class="i" style="left:375.00px;top:1172.50px;color:#1d1f25;" width="24.00" height="24.00" viewBox="0 0 24 24" fill="none" stroke="currentColor" stroke-width="1.30" stroke-linecap="round" stroke-linejoin="round"><g transform="rotate(-45 11.650 12.050)"><rect x="3" y="10.250" width="17.300" height="3.600" rx=".8"/><path d="M16.600 10.250v3.600"/></g><path d="M7.400 4.100v3.800M5.500 6h3.800M19.500 12.200v3.800M17.600 14.100h3.800" stroke-width="1.500"/><circle cx="15" cy="18.500" r="1.100" fill="currentColor" stroke="none"/></svg>
<span class="t" style="left:409.30px;top:1174.40px;font-size:18.00px;line-height:23.40px;color:#1d1f25;-webkit-text-stroke:0.30px #1d1f25;letter-spacing:0.122px;">Add...</span>
</main>
</body></html>
